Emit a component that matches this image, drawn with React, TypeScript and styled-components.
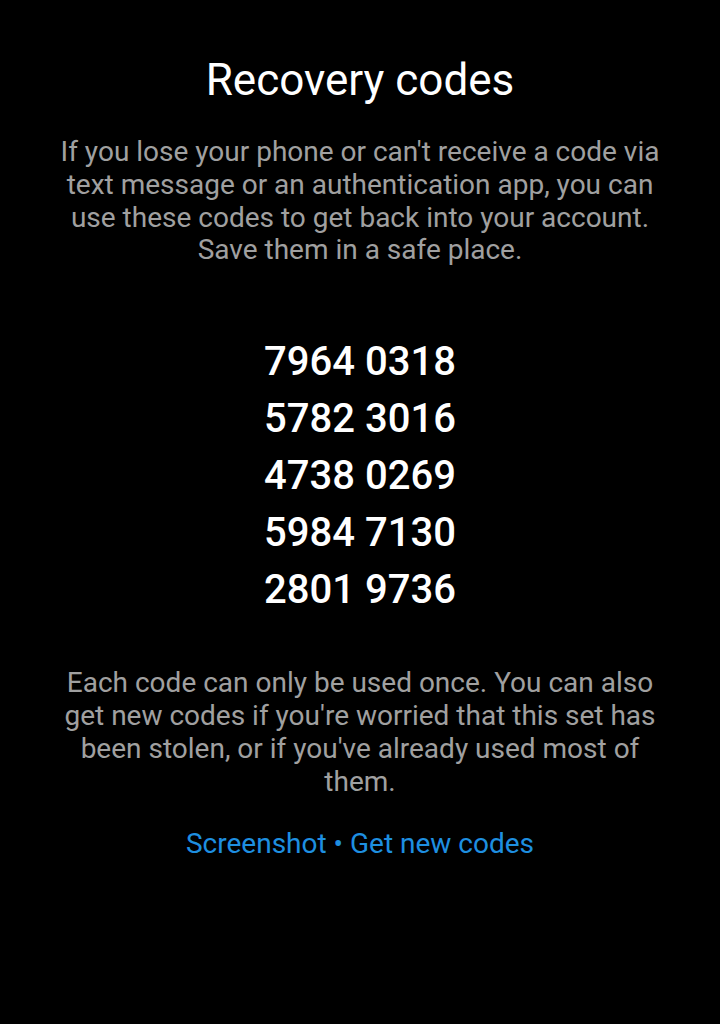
import React from "react";
import styled, { createGlobalStyle } from "styled-components";

const Global = createGlobalStyle`
  html, body { margin: 0; padding: 0; background: #000; }
  body { font-family: Roboto, "Noto Sans", sans-serif; }
`;

const Screen = styled.div`
  min-height: 1024px;
  background: #000;
  display: flex;
  flex-direction: column;
  align-items: center;
  padding: 54px 40px 0;
  box-sizing: border-box;
  text-align: center;
`;

const Title = styled.h1`
  margin: 0;
  font-weight: 400;
  font-size: 44px;
  line-height: 52px;
  color: #fff;
`;

const Paragraph = styled.p<{ $top: number }>`
  margin: ${(p) => p.$top}px 0 0;
  font-size: 28px;
  line-height: 32.8px;
  color: #a0a0a0;
  max-width: 620px;
`;

const Codes = styled.div`
  margin-top: 66px;
  display: flex;
  flex-direction: column;
`;

const Code = styled.div`
  font-size: 40px;
  font-weight: 500;
  line-height: 57px;
  color: #fff;
`;

const Links = styled.div`
  margin-top: 30px;
  font-size: 28px;
  line-height: 32.8px;
  color: #1e8fe0;
  white-space: pre;
`;

const Link = styled.span`
  cursor: pointer;
`;

const codes = ["7964 0318", "5782 3016", "4738 0269", "5984 7130", "2801 9736"];

export default function App() {
  return (
    <>
      <Global />
      <Screen>
        <Title>Recovery codes</Title>
        <Paragraph $top={30}>
          If you lose your phone or can't receive a code via text message or an
          authentication app, you can use these codes to get back into your
          account. Save them in a safe place.
        </Paragraph>
        <Codes>
          {codes.map((c) => (
            <Code key={c}>{c}</Code>
          ))}
        </Codes>
        <Paragraph $top={49}>
          Each code can only be used once. You can also get new codes if you're
          worried that this set has been stolen, or if you've already used most
          of them.
        </Paragraph>
        <Links>
          <Link>Screenshot</Link>
          {" • "}
          <Link>Get new codes</Link>
        </Links>
      </Screen>
    </>
  );
}
